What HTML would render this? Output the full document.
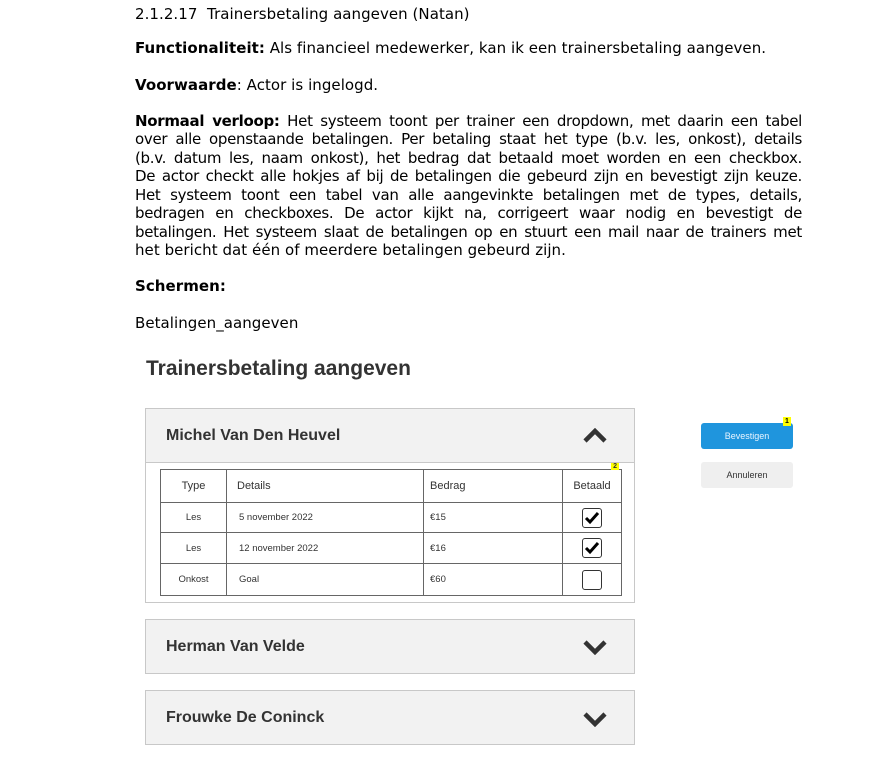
<!DOCTYPE html>
<html><head><meta charset="utf-8"><style>
body{margin:0;width:883px;height:765px;background:#fff;position:relative;overflow:hidden;font-family:"DejaVu Sans",Verdana,sans-serif;color:#000}
.t{position:absolute;left:135px;font-size:15px;white-space:nowrap;letter-spacing:0.05px}
.j{position:absolute;left:135px;width:667px;font-size:15px;text-align:justify;text-align-last:justify;white-space:nowrap;letter-spacing:-0.3px}
.a{font-family:"Liberation Sans",Arial,sans-serif;position:absolute}
.panel{position:absolute;left:145px;width:488px;border:1px solid #c8c8c8;background:#f2f2f2}
.ph{font-family:"Liberation Sans",Arial,sans-serif;font-weight:bold;font-size:16px;color:#333;position:absolute;left:20px}
table{border-collapse:collapse;table-layout:fixed;font-family:"Liberation Sans",Arial,sans-serif;color:#333}
td{border:1px solid #666;font-size:9.5px;padding:0}
.cb{width:18px;height:18px;border:1px solid #333;border-radius:3px;margin:0 auto;position:relative;background:#fff}
</style></head><body>
<div class="t" style="top:5px">2.1.2.17&nbsp; Trainersbetaling aangeven (Natan)</div>
<div class="t" style="top:39px"><b>Functionaliteit:</b> Als financieel medewerker, kan ik een trainersbetaling aangeven.</div>
<div class="t" style="top:76px"><b>Voorwaarde</b>: Actor is ingelogd.</div>
<div class="j" style="top:112px"><b>Normaal verloop:</b> Het systeem toont per trainer een dropdown, met daarin een tabel</div>
<div class="j" style="top:130px">over alle openstaande betalingen. Per betaling staat het type (b.v. les, onkost), details</div>
<div class="j" style="top:149px">(b.v. datum les, naam onkost), het bedrag dat betaald moet worden en een checkbox.</div>
<div class="j" style="top:167px">De actor checkt alle hokjes af bij de betalingen die gebeurd zijn en bevestigt zijn keuze.</div>
<div class="j" style="top:186px">Het systeem toont een tabel van alle aangevinkte betalingen met de types, details,</div>
<div class="j" style="top:204px">bedragen en checkboxes. De actor kijkt na, corrigeert waar nodig en bevestigt de</div>
<div class="j" style="top:223px">betalingen. Het systeem slaat de betalingen op en stuurt een mail naar de trainers met</div>
<div class="t" style="top:241px">het bericht dat één of meerdere betalingen gebeurd zijn.</div>
<div class="t" style="top:277px"><b>Schermen:</b></div>
<div class="t" style="top:314px">Betalingen_aangeven</div>
<div class="a" style="left:146px;top:357px;font-size:21px;font-weight:bold;color:#333">Trainersbetaling aangeven</div>

<div class="panel" style="top:408px;height:193px;background:#fff">
 <div style="position:absolute;left:0;top:0;width:488px;height:53px;background:#f2f2f2;border-bottom:1px solid #c8c8c8"></div>
 <div class="ph" style="top:18px">Michel Van Den Heuvel</div>
 <svg style="position:absolute;left:437px;top:19px" width="24" height="16" viewBox="0 0 24 16"><path d="M2 13 L12 3 L22 13" fill="none" stroke="#333" stroke-width="4.5"/></svg>
 <table style="position:absolute;left:14px;top:60px;width:461px">
  <colgroup><col style="width:66px"><col style="width:197px"><col style="width:139px"><col style="width:59px"></colgroup>
  <tr style="height:33px"><td style="text-align:center;font-size:11px">Type</td><td style="padding-left:10px;font-size:11px">Details</td><td style="padding-left:6px;font-size:11px">Bedrag</td><td style="text-align:center;font-size:11px;position:relative">Betaald<span style="position:absolute;right:2px;top:-7px;background:#ff0;font-size:7px;font-weight:bold;padding:0 2px">2</span></td></tr>
  <tr style="height:30px"><td style="text-align:center">Les</td><td style="padding-left:12px">5 november 2022</td><td style="padding-left:6px">€15</td><td><div class="cb"><svg style="position:absolute;left:1px;top:2px" width="16" height="14"><path d="M2 7 L6 11 L14 2" fill="none" stroke="#000" stroke-width="3"/></svg></div></td></tr>
  <tr style="height:31px"><td style="text-align:center">Les</td><td style="padding-left:12px">12 november 2022</td><td style="padding-left:6px">€16</td><td><div class="cb"><svg style="position:absolute;left:1px;top:2px" width="16" height="14"><path d="M2 7 L6 11 L14 2" fill="none" stroke="#000" stroke-width="3"/></svg></div></td></tr>
  <tr style="height:32px"><td style="text-align:center">Onkost</td><td style="padding-left:12px">Goal</td><td style="padding-left:6px">€60</td><td><div class="cb"></div></td></tr>
 </table>
</div>

<div class="panel" style="top:619px;height:53px"><div class="ph" style="top:18px">Herman Van Velde</div>
 <svg style="position:absolute;left:437px;top:19px" width="24" height="16" viewBox="0 0 24 16"><path d="M2 3 L12 13 L22 3" fill="none" stroke="#333" stroke-width="4.5"/></svg></div>
<div class="panel" style="top:690px;height:53px"><div class="ph" style="top:18px">Frouwke De Coninck</div>
 <svg style="position:absolute;left:437px;top:20px" width="24" height="16" viewBox="0 0 24 16"><path d="M2 3 L12 13 L22 3" fill="none" stroke="#333" stroke-width="4.5"/></svg></div>

<div class="a" style="left:701px;top:423px;width:92px;height:26px;background:#1f95dd;border-radius:3px;color:#e8f4ff;font-size:9px;text-align:center;line-height:26px">Bevestigen</div>
<div class="a" style="left:783px;top:417px;background:#ff0;font-size:7px;font-weight:bold;padding:0 2px;line-height:9px">1</div>
<div class="a" style="left:701px;top:462px;width:92px;height:26px;background:#efefef;border-radius:3px;color:#333;font-size:9px;text-align:center;line-height:26px">Annuleren</div>
</body></html>
